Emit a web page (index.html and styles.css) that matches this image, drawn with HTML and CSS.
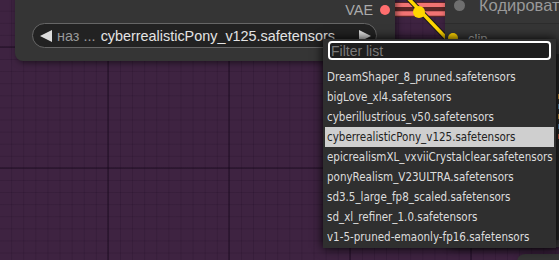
FILE: index.html
```html
<!DOCTYPE html>
<html>
	<head>
		<meta charset="utf-8">
		<title>ComfyUI</title>
		<link rel="stylesheet" href="styles.css">
	</head>
	<body>
		<div class="canvas">
			<svg class="links" width="559" height="260" viewBox="0 0 559 260">
				<path d="M388 9.5 L452 9.5" stroke="#5a2626" stroke-width="15" fill="none"/>
				<path d="M388 5 L452 5" stroke="#f27373" stroke-width="4" fill="none"/>
				<path d="M388 13.5 L452 13.5" stroke="#f27373" stroke-width="4.5" fill="none"/>
				<path d="M406 -4 L450 42" stroke="#1a1a1a" stroke-width="5.5" fill="none"/>
				<path d="M406 -4 L450 42" stroke="#ffd500" stroke-width="3.5" fill="none"/>
				<circle cx="419" cy="12" r="6" fill="#ffd500"/>
			</svg>

			<div class="node node-vae">
				<div class="outputs">
					<span class="slot-label">VAE</span>
					<span class="slot-dot vae"></span>
				</div>
				<div class="combo">
					<span class="arrow arrow-left"></span>
					<span class="combo-label">наз ...</span>
					<span class="combo-value">cyberrealisticPony_v125.safetensors</span>
					<span class="arrow arrow-right"></span>
				</div>
			</div>

			<div class="node node-encode">
				<div class="title">
					<span class="collapse"></span>
					<span class="title-text">Кодировать текст CLIP</span>
				</div>
				<div class="inputs">
					<span class="slot-dot clip"></span>
					<span class="slot-label">clip</span>
				</div>
				<div class="textbox">
					<span class="tag orange"></span>
					<span class="tag blue"></span>
					<span class="tag orange"></span>
					<span class="tag blue"></span>
					<span class="tag red"></span>
				</div>
			</div>

			<div class="node node-corner"></div>

			<div class="menu">
				<input class="filter" type="text" placeholder="Filter list">
				<div class="entry">DreamShaper_8_pruned.safetensors</div>
				<div class="entry">bigLove_xl4.safetensors</div>
				<div class="entry">cyberillustrious_v50.safetensors</div>
				<div class="entry selected">cyberrealisticPony_v125.safetensors</div>
				<div class="entry">epicrealismXL_vxviiCrystalclear.safetensors</div>
				<div class="entry">ponyRealism_V23ULTRA.safetensors</div>
				<div class="entry">sd3.5_large_fp8_scaled.safetensors</div>
				<div class="entry">sd_xl_refiner_1.0.safetensors</div>
				<div class="entry">v1-5-pruned-emaonly-fp16.safetensors</div>
			</div>
		</div>
	</body>
</html>
```

FILE: styles.css
```css
html, body {
    margin: 0;
}
body {
    width: 559px;
    height: 260px;
    overflow: hidden;
    background-color: #3e2341;
    background-image:
        linear-gradient(to right, rgba(20,5,25,0.35) 2px, transparent 2px),
        linear-gradient(to bottom, rgba(20,5,25,0.35) 2px, transparent 2px),
        linear-gradient(to right, rgba(20,5,25,0.16) 1px, transparent 1px),
        linear-gradient(to bottom, rgba(20,5,25,0.16) 1px, transparent 1px);
    background-size: 121px 121px, 121px 121px, 12.1px 12.1px, 12.1px 12.1px;
    background-position: 107px 46px, 107px 46px, 11.2px 10.7px, 11.2px 10.7px;
    font-family: "Liberation Sans", Arial, sans-serif;
    cursor: default;
}
.canvas {
    position: relative;
    width: 559px;
    height: 260px;
    overflow: hidden;
}
.links {
    position: absolute;
    left: 0;
    top: 0;
}

/* nodes */
.node {
    position: absolute;
    background: #353535;
    border-radius: 8px;
    box-shadow: 2px 2px 6px rgba(0,0,0,0.5);
    box-sizing: border-box;
}
.node-vae {
    left: 15px;
    top: -12px;
    width: 380px;
    height: 73px;
    padding: 12px 5px 0 17px;
    display: flex;
    flex-direction: column;
}
.outputs {
    display: flex;
    justify-content: flex-end;
    align-items: center;
    gap: 7px;
    height: 19px;
}
.slot-label {
    color: #aaa;
    font-size: 14.4px;
}
.slot-dot {
    flex-shrink: 0;
    width: 10px;
    height: 10px;
    border-radius: 50%;
}
.vae {
    background: #ff6e6e;
}
.clip {
    background: #ffd500;
}
.combo {
    display: flex;
    align-items: center;
    height: 25px;
    box-sizing: border-box;
    margin: 4px 13px 0 0;
    padding: 0 5px 0 7px;
    border: 1px solid #666;
    border-radius: 13px;
    background: #222;
    font-size: 14.4px;
    white-space: nowrap;
}
.arrow {
    width: 0;
    height: 0;
    border-top: 6.5px solid transparent;
    border-bottom: 6.5px solid transparent;
}
.arrow-left {
    border-right: 12px solid #ddd;
}
.arrow-right {
    border-left: 12px solid #ddd;
    margin-left: 24px;
}
.combo-label {
    color: #999;
    margin-left: 5px;
}
.combo-value {
    flex: 1;
    text-align: right;
    color: #e4e4e4;
}

.node-encode {
    left: 445px;
    top: -12px;
    width: 150px;
    height: 259px;
    display: flex;
    flex-direction: column;
}
.title {
    display: flex;
    align-items: center;
    height: 36px;
    padding-left: 9px;
    background: #363636;
    border-bottom: 1px solid #2c2c2c;
    border-radius: 8px 0 0 0;
    box-sizing: border-box;
    overflow: hidden;
}
.collapse {
    flex-shrink: 0;
    width: 11px;
    height: 11px;
    border-radius: 50%;
    background: #6f6f6f;
}
.title-text {
    margin-left: 14px;
    color: #999;
    font-size: 16.5px;
    white-space: nowrap;
}
.inputs {
    display: flex;
    align-items: center;
    gap: 10px;
    height: 20px;
    margin-top: 4px;
    padding-left: 3px;
}
.inputs .slot-label {
    font-size: 13px;
}
.textbox {
    margin: 6px 0 0 10px;
    height: 186px;
    background: #262626;
    border-radius: 4px;
    display: flex;
    flex-direction: column;
    align-items: flex-start;
    gap: 5px;
    padding: 40px 0 0 103px;
    box-sizing: border-box;
}
.tag {
    width: 6px;
    height: 5px;
}
.orange {
    background: #d9902b;
}
.blue {
    background: #4a8cc9;
}
.red {
    background: #d9603b;
}
.node-corner {
    left: 517px;
    top: 254px;
    width: 80px;
    height: 40px;
}

/* dropdown */
.menu {
    position: absolute;
    left: 323px;
    top: 39px;
    width: 233px;
    padding: 2px 0 1px;
    background: #2f2f2f;
    box-shadow: 0 0 10px #000;
}
.filter {
    display: block;
    box-sizing: border-box;
    width: 223px;
    height: 19px;
    margin: 0 5px 7px;
    padding: 0 1px;
    border: 2px solid #fff;
    border-radius: 4px;
    background: #1e1e1e;
    color: #ddd;
    font-family: "Liberation Sans", Arial, sans-serif;
    font-size: 14px;
    outline: none;
}
.filter::placeholder {
    color: #7a7a7a;
}
.entry {
    margin: 0 2px;
    padding: 3px 2px;
    height: 20px;
    box-sizing: border-box;
    line-height: 14px;
    font-family: "DejaVu Sans Condensed", "DejaVu Sans", sans-serif;
    font-size: 11.5px;
    color: #ddd;
    white-space: nowrap;
}
.entry.selected {
    background: #cfcfcf;
    color: #222;
}
```
